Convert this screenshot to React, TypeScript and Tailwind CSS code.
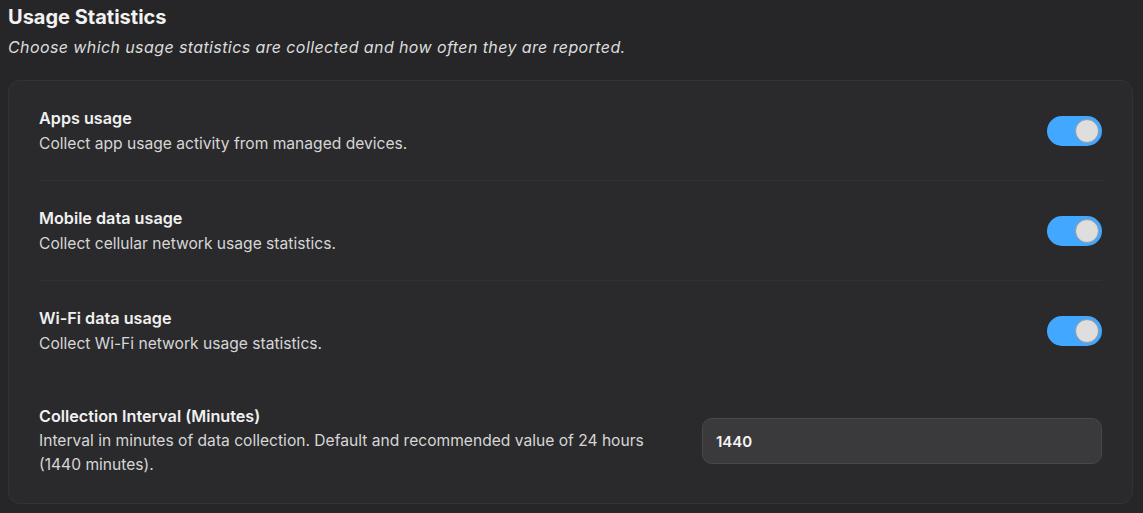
import { useState } from 'react'

type Setting = {
  id: string
  label: string
  description: string
}

const toggles: Setting[] = [
  { id: 'apps', label: 'Apps usage', description: 'Collect app usage activity from managed devices.' },
  { id: 'mobile', label: 'Mobile data usage', description: 'Collect cellular network usage statistics.' },
  { id: 'wifi', label: 'Wi-Fi data usage', description: 'Collect Wi-Fi network usage statistics.' },
]

function Toggle({ checked, onChange }: { checked: boolean; onChange: (v: boolean) => void }) {
  return (
    <button
      type="button"
      role="switch"
      aria-checked={checked}
      onClick={() => onChange(!checked)}
      className={`flex h-[30px] w-[55px] shrink-0 items-center rounded-full px-[3px] ${
        checked ? 'justify-end bg-[#42a8ff]' : 'justify-start bg-[#4a4a4e]'
      }`}
    >
      <span className="h-[24px] w-[24px] rounded-full border border-[#9a9a9a] bg-[#dedede]" />
    </button>
  )
}

export default function App() {
  const [state, setState] = useState<Record<string, boolean>>({ apps: true, mobile: true, wifi: true })
  const [interval, setInterval] = useState('1440')

  return (
    <div
      className="min-h-screen bg-[#262628] pt-[5px] pr-[10px] pb-[10px] pl-[8px] text-[#ececec]"
      style={{ fontFamily: 'Inter, "Liberation Sans", sans-serif' }}
    >
      <h2 className="text-[20px] font-bold leading-[25px] text-[#f2f2f2]">Usage Statistics</h2>
      <p className="mt-[6px] text-[16px] italic leading-[22px] tracking-[0.4px] text-[#dcdcdc]">
        Choose which usage statistics are collected and how often they are reported.
      </p>

      <div className="mt-[22px] rounded-[12px] border border-[#333336] bg-[#2a2a2c] px-[30px]">
        {toggles.map((t, i) => (
          <div
            key={t.id}
            className={`flex h-[100px] items-center justify-between ${
              i < 2 ? 'border-b border-[#313134]' : ''
            }`}
          >
            <div>
              <p className="text-[16.2px] font-semibold leading-[22px] text-[#f0f0f0]">{t.label}</p>
              <p className="mt-[4px] text-[15.6px] leading-[22px] text-[#d6d6d6]">{t.description}</p>
            </div>
            <Toggle checked={state[t.id]} onChange={(v) => setState({ ...state, [t.id]: v })} />
          </div>
        ))}

        <div className="flex items-center gap-[48px] pt-[24px] pb-[26px]">
          <div className="flex-1">
            <p className="text-[16.2px] font-semibold leading-[22px] text-[#f0f0f0]">
              Collection Interval (Minutes)
            </p>
            <p className="mt-[2px] text-[15.6px] leading-[24px] text-[#d6d6d6]">
              Interval in minutes of data collection. Default and recommended value of 24 hours (1440 minutes).
            </p>
          </div>
          <input
            value={interval}
            onChange={(e) => setInterval(e.target.value)}
            className="h-[46px] w-[400px] rounded-[10px] border border-[#48484b] bg-[#3a3a3c] px-[13px] text-[15px] font-semibold text-[#f4f4f4] outline-none"
          />
        </div>
      </div>
    </div>
  )
}
